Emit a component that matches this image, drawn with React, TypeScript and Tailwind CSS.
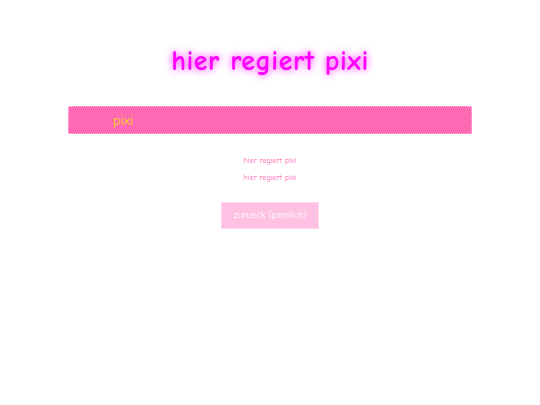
import React from 'react';

const comic = { fontFamily: '"Comic Sans MS", "Comic Neue", "Chalkboard SE", cursive' };

export default function App() {
  return (
    <div className="min-h-[405px] w-full bg-white" style={comic}>
      <div className="mx-auto w-[404px] pt-[41px]">
        <h1 className="text-center text-[28px] font-bold leading-[40px] tracking-[0.5px] text-[#ff00ff] [text-shadow:0_0_6px_#ff66ff,0_0_10px_#ff99ff]">
          hier regiert pixi
        </h1>
        <div className="mt-[25px] flex h-[28px] items-center border border-dotted border-[#ffc6e6] bg-[#ff69b4] pl-[44px]">
          <span className="text-[14px] text-[#ffd31a]">pixi</span>
        </div>
        <div className="mt-[21px] flex flex-col items-center gap-[6px] text-[8px] leading-[11px] text-[#ff69b4]">
          <p>hier regiert pixi</p>
          <p>hier regiert pixi</p>
        </div>
        <div className="mt-[19px] flex justify-center">
          <button className="h-[27px] w-[98px] border border-[#ffd6ec] bg-[#ffc0e3] text-[9.5px] text-white">
            zurueck (peinlich)
          </button>
        </div>
      </div>
    </div>
  );
}
